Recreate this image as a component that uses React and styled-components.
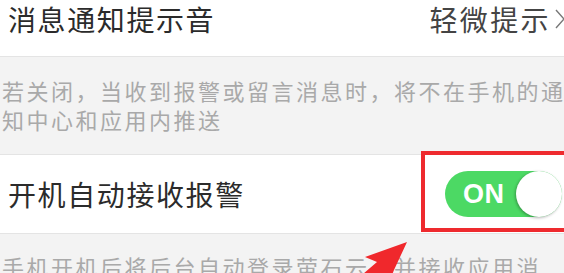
import React from "react";
import styled, { createGlobalStyle } from "styled-components";

const GlobalStyle = createGlobalStyle`
  html, body {
    margin: 0;
    padding: 0;
    background: #f3f3f3;
    overflow: hidden;
  }
  body {
    font-family: "Noto Sans CJK SC", "Noto Sans", sans-serif;
  }
`;

const Page = styled.div`
  position: relative;
  width: 564px;
  height: 273px;
  overflow: hidden;
  background: #f3f3f3;
`;

const Row = styled.div`
  display: flex;
  align-items: ${(p) => (p.$top ? "flex-start" : "center")};
  justify-content: space-between;
  height: ${(p) => p.$height}px;
  padding-left: 8px;
  background: #fff;
  border-top: ${(p) => (p.$bordered ? "1px solid #e4e4e4" : "none")};
  border-bottom: 1px solid #e4e4e4;
  box-sizing: border-box;
`;

const Label = styled.span`
  font-size: 28px;
  line-height: 38px;
  letter-spacing: 1.6px;
  color: #2b2b2b;
`;

const Value = styled.span`
  display: flex;
  align-items: center;
  gap: 3px;
  font-size: 28px;
  line-height: 38px;
  letter-spacing: 2.4px;
  color: #444;
  margin-right: -2px;
`;

const Note = styled.p`
  margin: 0;
  padding: ${(p) => p.$pad};
  font-size: 22px;
  line-height: 29px;
  letter-spacing: 2.5px;
  color: #a9a9a9;
  white-space: nowrap;
`;

const Toggle = styled.div`
  display: flex;
  align-items: center;
  justify-content: space-between;
  width: 117px;
  height: 46px;
  margin-right: 2px;
  border-radius: 23px;
  background: #4cd964;
  box-sizing: border-box;
  padding-left: 18px;
`;

const ToggleText = styled.span`
  font-family: "Liberation Sans", Arial, sans-serif;
  font-weight: bold;
  font-size: 27px;
  color: #fff;
  letter-spacing: 0.5px;
`;

const Knob = styled.span`
  width: 46px;
  height: 46px;
  border-radius: 50%;
  background: #fff;
  box-shadow: -1px 1px 3px rgba(0, 0, 0, 0.3);
`;

const Highlight = styled.div`
  position: absolute;
  left: 421px;
  top: 151px;
  width: 150px;
  height: 81px;
  border: 4px solid #ee2a2e;
  box-sizing: border-box;
`;

const Arrow = styled.svg`
  position: absolute;
  left: 0;
  top: 0;
  pointer-events: none;
`;

export default function App() {
  return (
    <Page>
      <GlobalStyle />
      <Row $height={57} $top>
        <Label>消息通知提示音</Label>
        <Value>
          轻微提示
          <svg width="12" height="24" viewBox="0 0 12 24">
            <path d="M2 3 L10 12 L2 21" fill="none" stroke="#777" strokeWidth="1.4" />
          </svg>
        </Value>
      </Row>
      <Note $pad="19px 0 20px 2px">
        若关闭，当收到报警或留言消息时，将不在手机的通
        <br />
        知中心和应用内推送
      </Note>
      <Row $height={80} $bordered>
        <Label>开机自动接收报警</Label>
        <Toggle>
          <ToggleText>ON</ToggleText>
          <Knob />
        </Toggle>
      </Row>
      <Note $pad="18px 0 0 2px">手机开机后将后台自动登录萤石云，并接收应用消</Note>
      <Highlight />
      <Arrow width="564" height="273" viewBox="0 0 564 273">
        <polygon points="407,242 365,257 377,262 356,280 390,280 394,270" fill="#f0282c" />
      </Arrow>
    </Page>
  );
}
